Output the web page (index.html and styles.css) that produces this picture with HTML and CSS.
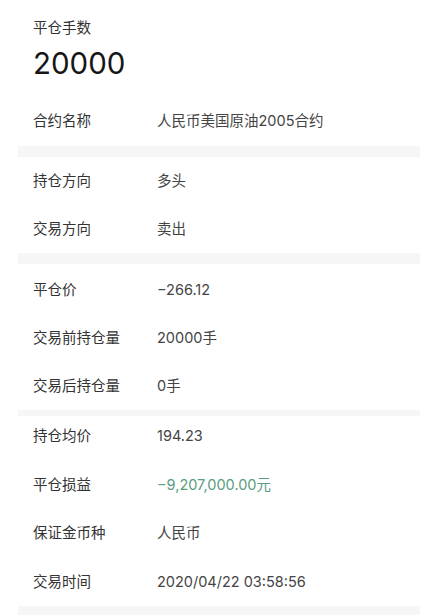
FILE: index.html
```html
<!DOCTYPE html>
<html lang="zh-CN">
<head>
<meta charset="utf-8">
<title>平仓详情</title>
<link rel="stylesheet" href="styles.css">
</head>
<body>
<div class="page">
  <div class="header">
    <div class="title">平仓手数</div>
    <div class="amount">20000</div>
  </div>
  <div class="section section-contract">
    <div class="row"><span class="label">合约名称</span><span class="value">人民币美国原油2005合约</span></div>
  </div>
  <div class="band"></div>
  <div class="section">
    <div class="row"><span class="label">持仓方向</span><span class="value">多头</span></div>
    <div class="row"><span class="label">交易方向</span><span class="value">卖出</span></div>
  </div>
  <div class="band"></div>
  <div class="section section-position">
    <div class="row"><span class="label">平仓价</span><span class="value">−266.12</span></div>
    <div class="row"><span class="label">交易前持仓量</span><span class="value">20000手</span></div>
    <div class="row"><span class="label">交易后持仓量</span><span class="value">0手</span></div>
  </div>
  <div class="band band-thin"></div>
  <div class="section section-result">
    <div class="row"><span class="label">持仓均价</span><span class="value">194.23</span></div>
    <div class="row"><span class="label">平仓损益</span><span class="value green">−9,207,000.00元</span></div>
    <div class="row"><span class="label">保证金币种</span><span class="value">人民币</span></div>
    <div class="row"><span class="label">交易时间</span><span class="value">2020/04/22 03:58:56</span></div>
  </div>
  <div class="band"></div>
</div>
</body>
</html>
```
FILE: styles.css
```css
html, body {
  margin: 0;
  padding: 0;
  background: #ffffff;
}
body {
  font-family: "Inter", "Noto Sans CJK SC", sans-serif;
  color: #333333;
}
.page {
  margin: 0 7px 0 18px;
}
.header {
  padding: 18px 0 14px 15px;
}
.title {
  font-size: 14.5px;
  line-height: 20px;
  color: #333333;
}
.amount {
  margin-top: 6px;
  font-size: 29.5px;
  line-height: 38px;
  color: #161616;
}
.section {
  display: flex;
  flex-direction: column;
}
.row {
  display: flex;
  align-items: center;
  height: 48px;
  padding-left: 15px;
  font-size: 14.5px;
  line-height: 20px;
}
.section-contract .row {
  height: 50px;
}
.section-position {
  padding-top: 2px;
}
.section-result .row {
  align-items: flex-start;
  box-sizing: border-box;
  height: 48.5px;
  padding-top: 10px;
}
.section-result .row:last-child {
  height: 44px;
}
.label {
  width: 124px;
  flex: none;
  color: #333333;
}
.value {
  color: #444444;
}
.green {
  color: #5a9d80;
}
.band {
  height: 11px;
  background: #f6f6f6;
}
.band-thin {
  height: 6px;
}
```
